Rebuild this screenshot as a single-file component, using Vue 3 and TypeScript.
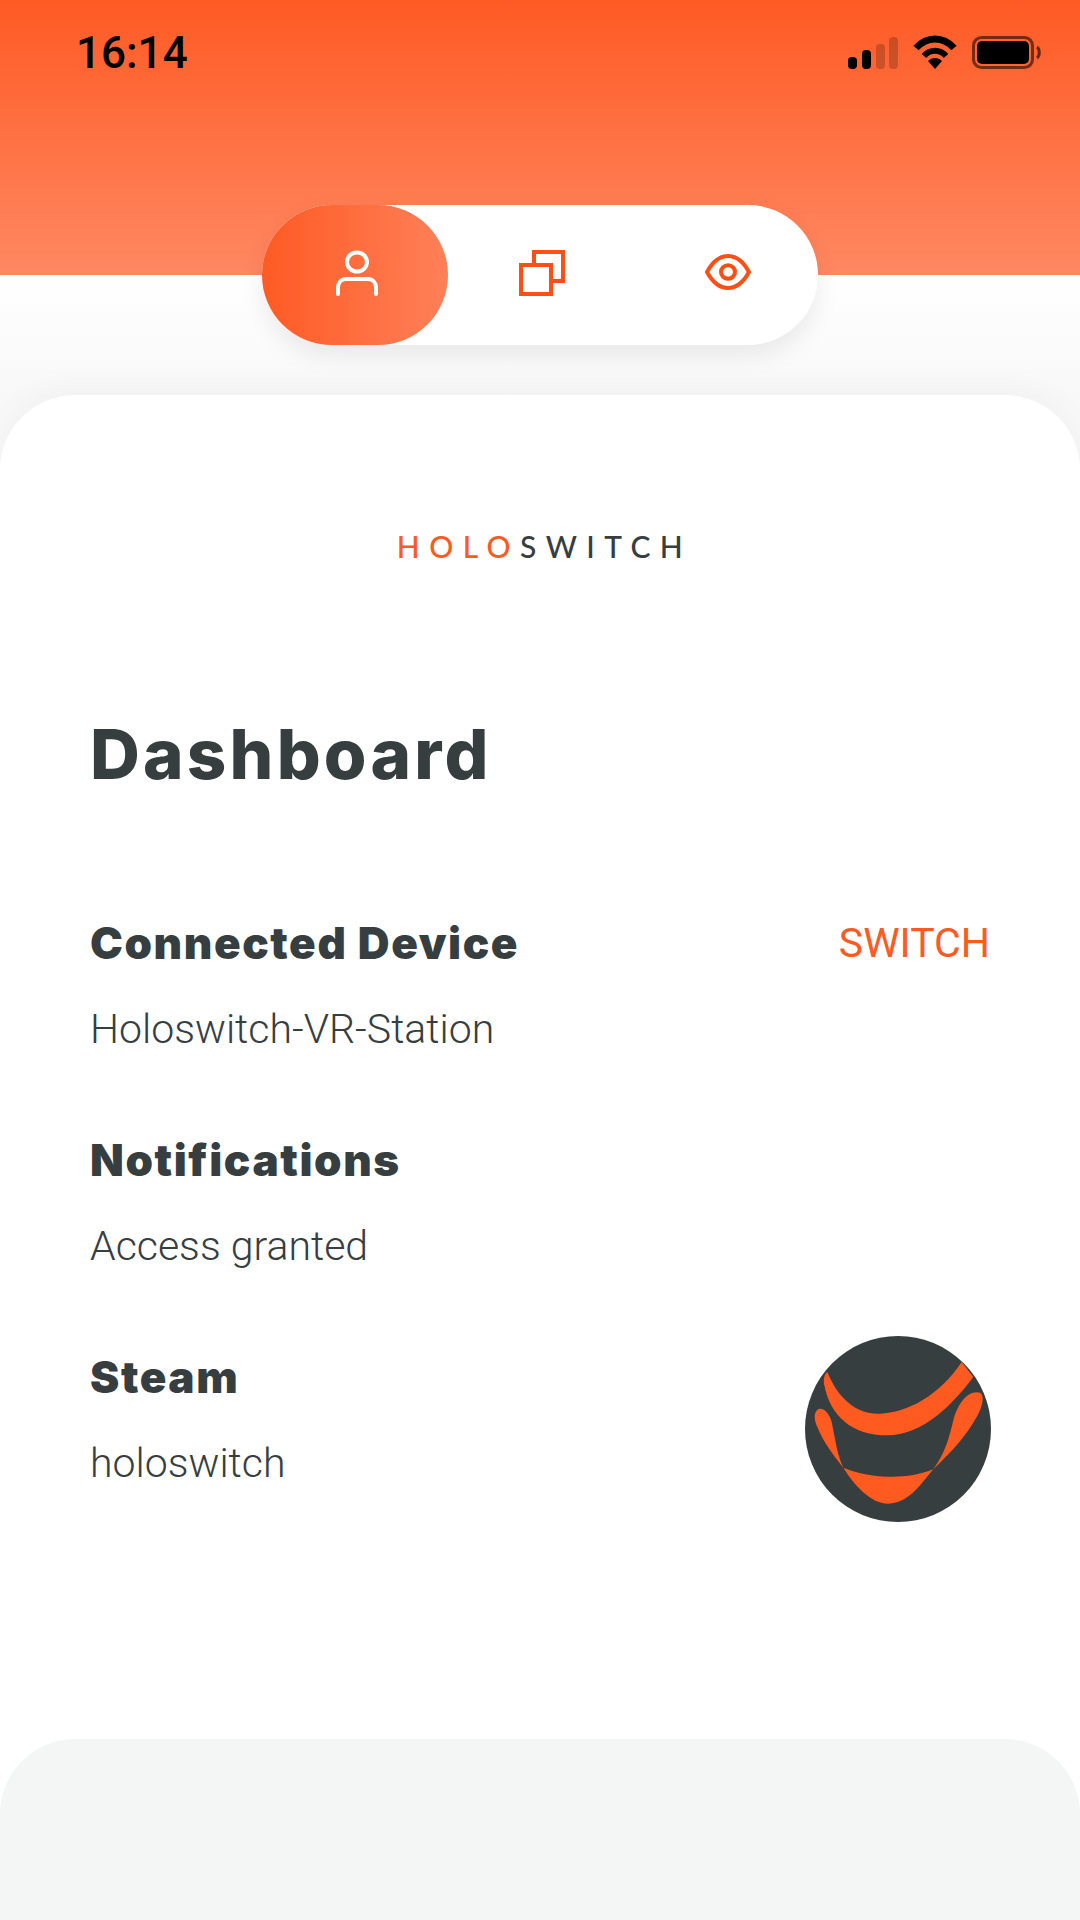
<script setup lang="ts">
const sections = [
  { title: 'Connected Device', value: 'Holoswitch-VR-Station', action: 'SWITCH' },
  { title: 'Notifications', value: 'Access granted' },
  { title: 'Steam', value: 'holoswitch', avatar: true },
];
</script>

<template>
  <div class="screen">
    <header class="header">
      <div class="status-bar">
        <span class="time">16:14</span>
        <div class="status-icons">
          <svg class="signal" width="52" height="32" viewBox="0 0 52 32">
            <rect x="2" y="20" width="9" height="12" rx="4" fill="#000" />
            <rect x="16" y="13" width="9" height="19" rx="4" fill="#000" />
            <rect x="30" y="7" width="9" height="25" rx="4" fill="#000" opacity="0.2" />
            <rect x="43" y="0" width="9" height="32" rx="4" fill="#000" opacity="0.2" />
          </svg>
          <svg class="wifi" width="44" height="34" viewBox="0 0 44 34">
            <path d="M3 13C14 1 30 1 41 13" fill="none" stroke="#000" stroke-width="7" />
            <path d="M11 21C17 14 27 14 33 21" fill="none" stroke="#000" stroke-width="6" />
            <path d="M15 26C19 22 25 22 29 26L22 34Z" fill="#000" />
          </svg>
          <svg class="battery" width="69" height="33" viewBox="0 0 69 33">
            <rect x="1.5" y="1.5" width="59" height="30" rx="8" fill="none" stroke="#000" stroke-opacity="0.55" stroke-width="3" />
            <rect x="5" y="5" width="52" height="23" rx="5" fill="#000" />
            <path d="M65 11C68 13 68 20 65 22" fill="none" stroke="#000" stroke-opacity="0.6" stroke-width="3" />
          </svg>
        </div>
      </div>
    </header>

    <nav class="tabs">
      <button class="tab active">
        <svg width="46" height="46" viewBox="0 0 46 46" fill="none" stroke="#fff" stroke-width="4" stroke-linecap="round">
          <ellipse cx="23" cy="12" rx="10" ry="9.5" />
          <path d="M4 44V38C4 32.500 7.500 29 12 29H34C38.500 29 42 32.500 42 38V44" />
        </svg>
      </button>
      <button class="tab copy">
        <svg width="46" height="46" viewBox="0 0 46 46" fill="none" stroke="#ff4f14" stroke-width="4">
          <path d="M15 15V2H44V31H32" />
          <rect x="2" y="15" width="30" height="29" />
        </svg>
      </button>
      <button class="tab">
        <svg class="eye" width="46" height="36" viewBox="0 0 46 36" fill="none" stroke="#ff4f14" stroke-width="4">
          <path d="M2 18C8 7 15 2 23 2C31 2 38 7 44 18C38 29 31 34 23 34C15 34 8 29 2 18Z" />
          <ellipse cx="23" cy="18" rx="7" ry="6.800" />
        </svg>
      </button>
    </nav>

    <main class="card">
      <div class="logo"><span class="logo-accent">HOLO</span>SWITCH</div>
      <h1 class="title">Dashboard</h1>
      <section v-for="item in sections" :key="item.title" class="section">
        <div class="section-text">
          <h2 class="section-title">{{ item.title }}</h2>
          <p class="section-value">{{ item.value }}</p>
        </div>
        <a v-if="item.action" class="action">{{ item.action }}</a>
        <svg v-if="item.avatar" class="avatar" width="186" height="186" viewBox="45 47 558 558">
          <circle cx="324" cy="326" r="279" fill="#373e40" />
          <path fill="#ff5a1f" d="M112 155C135 210 180 282 270 280C350 278 450 225 515 125L550 170C490 250 400 345 290 345C190 345 120 290 102 190C100 172 105 160 112 155Z" />
          <path fill="#ff5a1f" d="M85 267C70 275 72 300 82 320C100 365 130 405 160 442C140 400 135 350 125 305C118 280 100 260 85 267Z" />
          <path fill="#ff5a1f" d="M572 218C585 230 575 265 560 290C530 345 480 400 430 447C465 400 478 350 490 300C500 260 530 205 572 218Z" />
          <path fill="#ff5a1f" d="M160 442C240 475 350 480 430 447C400 480 360 550 295 550C240 550 190 490 160 442Z" />
        </svg>
      </section>
    </main>

    <footer class="bottom-panel"></footer>
  </div>
</template>

<style>
html,
body {
  margin: 0;
  background: #fff;
}
</style>

<style scoped>
.screen {
  width: 1080px;
  height: 1920px;
  overflow: hidden;
  display: flex;
  flex-direction: column;
  background: linear-gradient(#fff 275px, #f8f8f8 395px);
  font-family: Roboto, sans-serif;
  color: #373e40;
}

.header {
  height: 275px;
  flex: none;
  background: linear-gradient(#ff5a24, #ff8862);
}

.status-bar {
  display: flex;
  justify-content: space-between;
  align-items: flex-start;
  padding: 27px 39px 0 76px;
}

.time {
  font-family: Roboto, sans-serif;
  font-size: 44px;
  font-weight: 500;
  line-height: 52px;
  color: #000;
}

.status-icons {
  display: flex;
  align-items: flex-end;
  gap: 15px;
  padding-top: 8px;
}

.tabs {
  flex: none;
  position: relative;
  align-self: center;
  display: flex;
  width: 556px;
  height: 140px;
  margin-top: -70px;
  border-radius: 70px;
  background: #fff;
  box-shadow: 0 10px 24px rgba(0, 0, 0, 0.08);
}

.tab {
  flex: none;
  width: 185px;
  display: flex;
  align-items: center;
  justify-content: center;
  border: 0;
  padding: 0 0 4px 4px;
  background: none;
  border-radius: 70px;
}

.tab.copy {
  padding: 0 0 4px 2px;
}

.tab:last-child {
  padding: 0 0 7px 5px;
}

.tab.active {
  width: 186px;
  background: linear-gradient(90deg, #ff5a24, #ff8058);
}

.card {
  flex: 1;
  margin-top: 50px;
  padding: 134px 90px 0;
  border-radius: 75px 75px 0 0;
  background: #fff;
  box-shadow: 0 -8px 30px rgba(0, 0, 0, 0.03);
}

.logo {
  font-family: Lato, sans-serif;
  font-size: 30px;
  line-height: 34px;
  font-weight: 500;
  letter-spacing: 9.400px;
  padding-left: 9px;
  text-align: center;
  color: #373e40;
}

.logo-accent {
  color: #ff5a1f;
}

.title {
  margin: 151px 0 0;
  font-family: Inter, sans-serif;
  font-size: 69px;
  line-height: 80px;
  font-weight: 800;
  letter-spacing: 3.200px;
}

.section {
  display: flex;
  justify-content: space-between;
  align-items: flex-start;
  height: 217px;
}

.section:first-of-type {
  margin-top: 124px;
}

.section-title {
  margin: 0;
  font-family: Inter, sans-serif;
  font-size: 44px;
  line-height: 50px;
  font-weight: 900;
  letter-spacing: 1.600px;
}

.section-value {
  margin: 36px 0 0;
  font-size: 41px;
  line-height: 50px;
  font-weight: 300;
}

.action {
  font-size: 41px;
  line-height: 50px;
  color: #ff5a1f;
}

.avatar {
  margin-top: -16px;
  margin-right: -1px;
}

.bottom-panel {
  flex: none;
  position: absolute;
  top: 1739px;
  left: 0;
  width: 1080px;
  height: 181px;
  border-radius: 75px 75px 0 0;
  background: #f4f5f5;
}
</style>
